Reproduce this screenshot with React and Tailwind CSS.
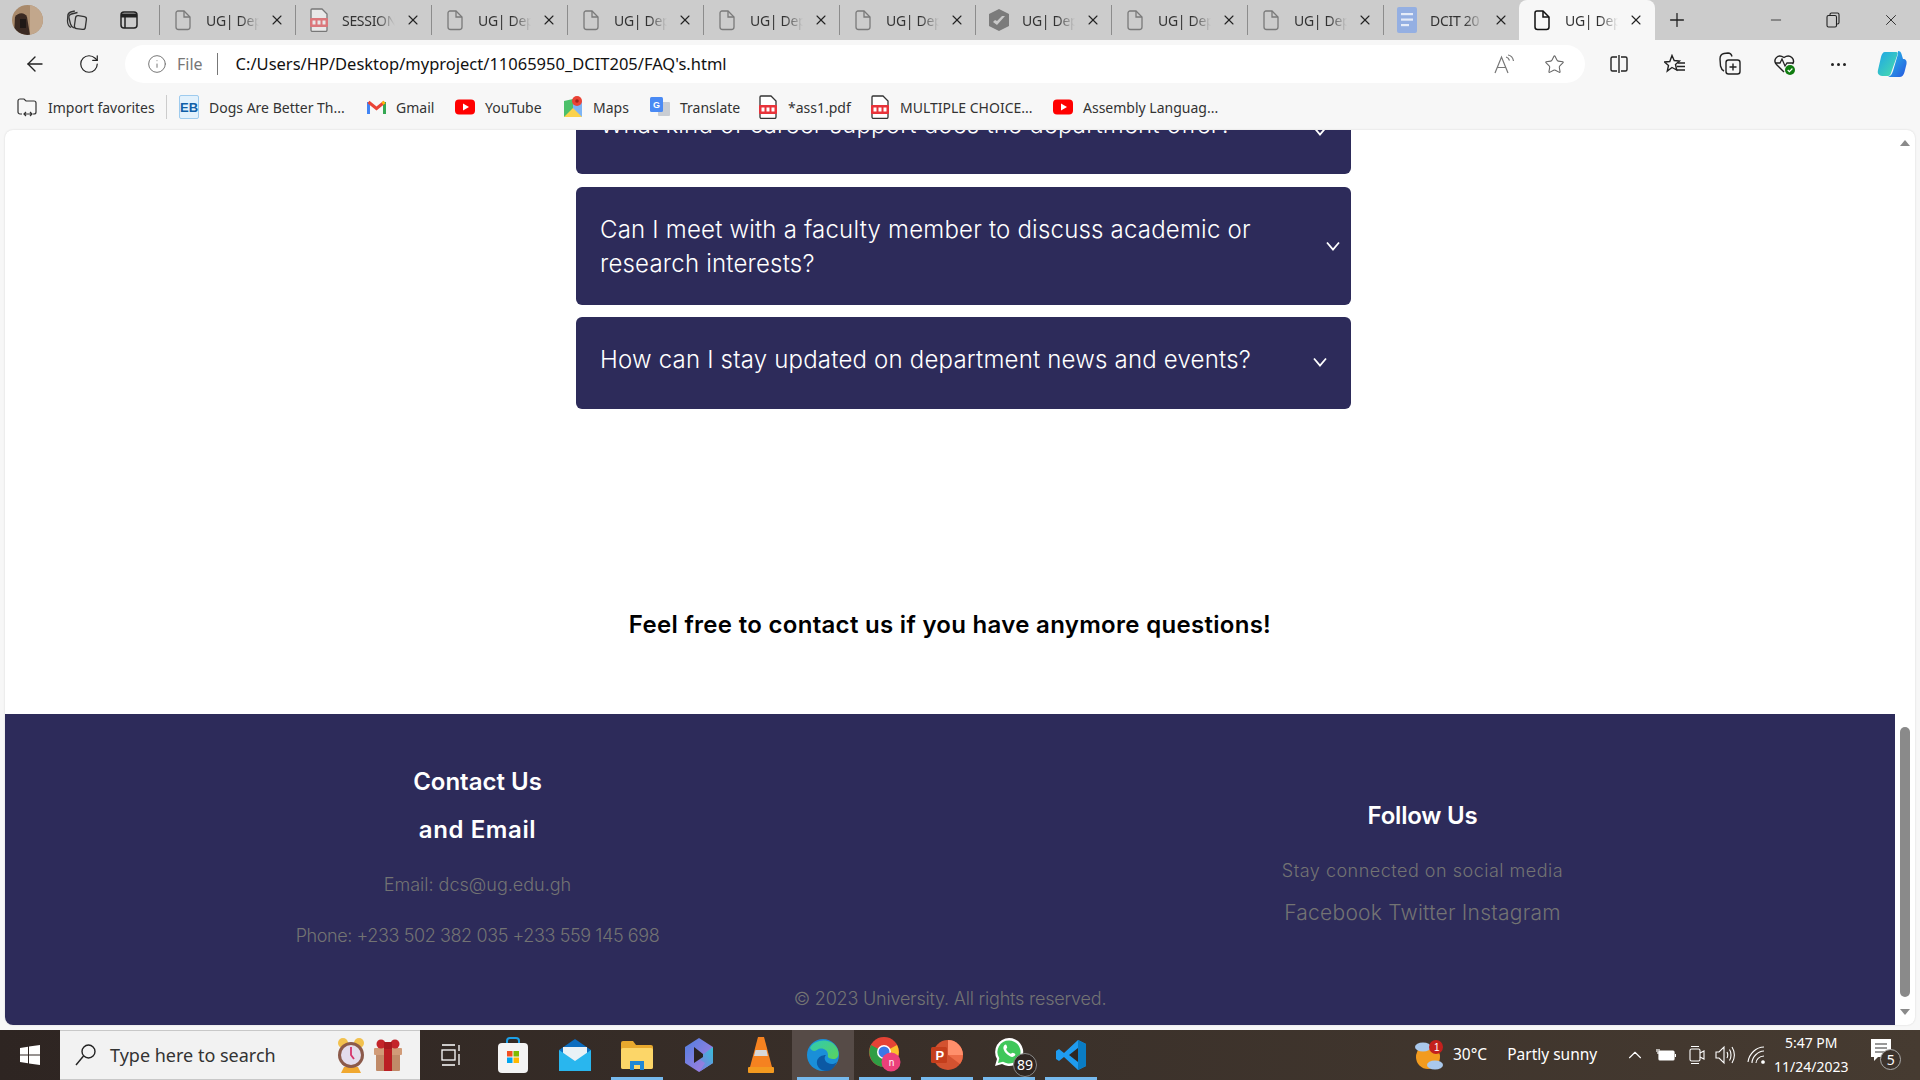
import React from "react";
import { X, Plus, Minus, ArrowLeft, RotateCw, Info, Star, ChevronUp } from "lucide-react";

const Doc = ({ c = "#7a7a7a", w = 1.3 }) => (
  <svg width="18" height="22" viewBox="0 0 18 22" fill="none" stroke={c} strokeWidth={w}>
    <path d="M4 2h6l6 6v10a2.5 2.5 0 0 1-2.5 2.5h-9A2.5 2.5 0 0 1 2 18V4a2 2 0 0 1 2-2Z" />
    <path d="M10 2v6h6" />
  </svg>
);
const Pdf = ({ fade }) => (
  <svg width="20" height="24" viewBox="0 0 20 24" opacity={fade ? 0.55 : 1}>
    <path d="M3 1h10l5 5v16a1.5 1.5 0 0 1-1.5 1.5h-13A1.5 1.5 0 0 1 2 22V2a1 1 0 0 1 1-1Z" fill="#fff" stroke="#333" strokeWidth="1.3" />
    <rect x="1" y="10" width="18" height="9" rx="1" fill="#e8333a" />
    <rect x="3.5" y="12.5" width="3" height="4" fill="#fff" />
    <rect x="8.5" y="12.5" width="3" height="4" fill="#fff" />
    <rect x="13.5" y="12.5" width="3" height="4" fill="#fff" />
  </svg>
);
const Shield = () => (
  <svg width="22" height="24" viewBox="0 0 22 24">
    <path d="M11 1 21 6v12l-10 5L1 18V6Z" fill="#7b7b7b" />
    <path d="M5 14l4 3 8-9-3 0-5 5-2-1Z" fill="#c9c9c9" />
  </svg>
);
const DocBlue = () => (
  <svg width="20" height="26" viewBox="0 0 20 26">
    <rect width="20" height="26" rx="2" fill="#94afe2" />
    <rect x="4" y="6" width="12" height="2.2" fill="#e6ecf8" />
    <rect x="4" y="11.5" width="12" height="2.2" fill="#e6ecf8" />
    <rect x="4" y="17" width="8" height="2.2" fill="#e6ecf8" />
  </svg>
);
const tabs = [
  { t: "UG| Dep", i: <Doc /> },
  { t: "SESSION", i: <Pdf fade /> },
  { t: "UG| Dep", i: <Doc /> },
  { t: "UG| Dep", i: <Doc /> },
  { t: "UG| Dep", i: <Doc /> },
  { t: "UG| Dep", i: <Doc /> },
  { t: "UG| Dep", i: <Shield /> },
  { t: "UG| Dep", i: <Doc /> },
  { t: "UG| Dep", i: <Doc /> },
  { t: "DCIT 20", i: <DocBlue /> },
];

const Tab = ({ t, i, active }) => (
  <div className={active
    ? "flex h-[40px] w-[136px] shrink-0 items-center rounded-t-[8px] bg-[#f7f7f7]"
    : "flex h-[40px] w-[136px] shrink-0 items-center"}>
    {!active && <div className="h-[30px] w-px bg-[#8c8c8c]" />}
    <div className="flex w-[46px] justify-center">{i}</div>
    <div className="w-[53px] overflow-hidden text-[14px] tracking-[-0.3px] whitespace-nowrap text-[#333] [mask-image:linear-gradient(to_right,black_65%,transparent)]">{t}</div>
    <div className="flex w-[36px] justify-center"><X size={16} strokeWidth={1.6} color="#222" /></div>
  </div>
);

const YT = () => (
  <svg width="20" height="16" viewBox="0 0 20 16">
    <rect width="20" height="15" y=".5" rx="4" fill="#f00" />
    <path d="M8 4.5 14 8l-6 3.5Z" fill="#fff" />
  </svg>
);
const Gmail = () => (
  <svg width="19" height="15" viewBox="0 0 19 15" fill="none">
    <path d="M1.5 14V2" stroke="#4285f4" strokeWidth="3" />
    <path d="M17.5 14V2" stroke="#34a853" strokeWidth="3" />
    <path d="M1.5 2l8 6.5L17.5 2" stroke="#ea4335" strokeWidth="3" />
    <path d="M17.5 2l-2 1.6" stroke="#fbbc04" strokeWidth="3" />
  </svg>
);
const Maps = () => (
  <svg width="18" height="22" viewBox="0 0 18 22">
    <path d="M0 5 9 3v16l-9 2Z" fill="#4cc06a" />
    <path d="M9 3l9 2v16l-9-2Z" fill="#7db4f5" />
    <path d="M0 21 9 12l9 9Z" fill="#fbd24c" />
    <circle cx="13" cy="5" r="5" fill="#ea4335" />
    <circle cx="13" cy="5" r="1.8" fill="#a4241c" />
  </svg>
);
const Translate = () => (
  <svg width="20" height="20" viewBox="0 0 20 20">
    <rect x="8" y="5" width="12" height="14" rx="1" fill="#c9cdd3" />
    <rect width="13" height="15" rx="1.5" fill="#4a8af4" />
    <text x="3" y="11" fontSize="9" fontWeight="700" fill="#fff" fontFamily="Liberation Sans">G</text>
  </svg>
);
const EB = () => (
  <div className="flex h-[24px] w-[20px] items-center justify-center rounded-[2px] border border-[#9ecbee] bg-[#e2f1fc] font-['Liberation_Sans',sans-serif] text-[13px] leading-none font-bold text-[#0f5fa8]">EB</div>
);
const ImportIcon = () => (
  <svg width="20" height="20" viewBox="0 0 20 20" fill="none" stroke="#333" strokeWidth="1.2">
    <path d="M5 17H3a2 2 0 0 1-2-2V4a2 2 0 0 1 2-2h4l2 2h8a2 2 0 0 1 2 2v9a2 2 0 0 1-2 2h-1" />
    <path d="M7 17h8M9 15l-2 2 2 2M13 15l2 2-2 2" />
  </svg>
);

const BM = ({ icon, t, w }) => (
  <div className="flex shrink-0 items-center" style={{ width: w }}>
    <div className="flex w-[20px] justify-center">{icon}</div>
    <span className="ml-[10px] text-[14px] whitespace-nowrap text-[#333]">{t}</span>
  </div>
);

const Card = ({ children, className = "", chevron }) => (
  <div className={`relative w-[775px] rounded-[6px] bg-[#2d2b5a] pt-[26px] pl-[24px] text-[24px] leading-[34px] font-light tracking-[0.2px] text-white ${className}`}>
    {children}
    {chevron}
  </div>
);

const Chevron = ({ className }) => (
  <svg className={className} width="14" height="10" viewBox="0 0 14 10" fill="none" stroke="#fff" strokeWidth="1.8"><path d="M1 1.5 7 8.5l6-7" /></svg>
);

const Avatar = () => (
  <svg width="31" height="30" viewBox="0 0 31 30">
    <defs><clipPath id="av"><ellipse cx="15.5" cy="15" rx="15.5" ry="15" /></clipPath></defs>
    <g clipPath="url(#av)">
      <rect width="31" height="30" fill="#a98a6b" />
      <rect x="18" width="13" height="30" fill="#c2a78c" />
      <path d="M3 12c3-5 10-5 12 0l3 18H2Z" fill="#3b2a22" />
      <rect x="8" y="14" width="6" height="9" fill="#1f1815" />
    </g>
  </svg>
);
const Collections = () => (
  <svg width="22" height="22" viewBox="0 0 22 22" fill="none" stroke="#333" strokeWidth="1.3">
    <rect x="9" y="7" width="11" height="13" rx="2.5" transform="rotate(8 14 13)" />
    <path d="M8 19c-2-1-3-2-3.5-4L3 9c-.5-2 .5-3.5 2.5-4l6-1.5" />
    <path d="M5 18.5C3 17.5 1.5 15 1.5 12L1.8 7c0-2 1.2-3.5 3-4l4-1" />
  </svg>
);
const TabAct = () => (
  <svg width="20" height="20" viewBox="0 0 20 20" fill="none" stroke="#222" strokeWidth="1.5">
    <rect x="2" y="2" width="16" height="16" rx="3" />
    <path d="M2 5.5h16" strokeWidth="4" />
    <path d="M6 6v12" />
  </svg>
);
const Restore = () => (
  <svg width="14" height="16" viewBox="0 0 14 16" fill="none" stroke="#222" strokeWidth="1.1">
    <rect x="1" y="3.5" width="9.5" height="11.5" rx="1.5" />
    <path d="M4 3.5V2.5A1.5 1.5 0 0 1 5.5 1h6A1.5 1.5 0 0 1 13 2.5v8a1.5 1.5 0 0 1-1.5 1.5h-1" />
  </svg>
);
const ReadAloud = () => (
  <svg width="22" height="20" viewBox="0 0 22 20" fill="none" stroke="#777" strokeWidth="1.2">
    <path d="M1 19 7.5 3l6.5 16M3.5 13.5h8" />
    <path d="M12 3c2 .5 3 2 3.5 3.5M14 1c3 .5 5 3 5.5 6" />
  </svg>
);
const Split = () => (
  <svg width="20" height="20" viewBox="0 0 20 20" fill="none" stroke="#222" strokeWidth="1.4">
    <path d="M8 3H3.5A1.5 1.5 0 0 0 2 4.5v11A1.5 1.5 0 0 0 3.5 17H8" />
    <path d="M12 3h4.5A1.5 1.5 0 0 1 18 4.5v11a1.5 1.5 0 0 1-1.5 1.5H12" />
    <path d="M10 1v18" />
  </svg>
);
const FavList = () => (
  <svg width="22" height="20" viewBox="0 0 22 20" fill="none" stroke="#222" strokeWidth="1.4">
    <path d="M8 1.5 10.2 6.5l5.3.5-4 3.5 1.2 5.5L8 13.5 3.3 17l1.2-5.5-4-3.5 5.3-.5Z" />
    <path d="M14 9h7M13 12.5h8M12.5 16h8.5" />
  </svg>
);
const CollAdd = () => (
  <svg width="22" height="24" viewBox="0 0 22 24" fill="none" stroke="#222" strokeWidth="1.4">
    <rect x="7" y="8" width="14" height="14" rx="2.5" />
    <path d="M14 11.5v7M10.5 15h7" />
    <path d="M5 19C3 18 2 16 1.5 14L1 7c0-3 1.5-5 4-5.5L9 1c2 0 3.5 1.5 4 3.5" />
  </svg>
);
const Health = () => (
  <svg width="24" height="24" viewBox="0 0 24 24" fill="none">
    <path d="M11 20 3.5 12.5C-.5 8 4.5 1 11 5.5 17.5 1 22.5 8 19.5 12" stroke="#222" strokeWidth="1.4" />
    <path d="M2 11h5l2-4 3 7 2-3h6" stroke="#222" strokeWidth="1.3" />
    <circle cx="17" cy="18" r="5" fill="#107c10" />
    <path d="M14.7 18l1.7 1.7 3-3.2" stroke="#fff" strokeWidth="1.2" />
  </svg>
);
const Copilot = () => (
  <svg width="30" height="30" viewBox="0 0 30 30">
    <defs>
      <linearGradient id="cp1" x1="0" y1="0" x2="1" y2="1"><stop offset="0" stopColor="#1ea5e8" /><stop offset="1" stopColor="#4be0a8" /></linearGradient>
      <linearGradient id="cp2" x1="0" y1="0" x2="1" y2="1"><stop offset="0" stopColor="#27c4e8" /><stop offset="1" stopColor="#2756e0" /></linearGradient>
    </defs>
    <path d="M8 3h11c2 0 2 1 1.5 2.5L14 24c-1 3-2 3-4 3H7c-5 0-7-2-6-6l3-13c.7-3 2-5 4-5Z" fill="url(#cp1)" />
    <path d="M21 2c2 0 3 1 3.5 3L26 10c3 0 4 2 3.5 5l-2 8c-.7 3-2.5 5-5 5H11c3-1 4-3 5-6l5-17Z" fill="url(#cp2)" />
  </svg>
);

const Win = () => (
  <svg width="20" height="20" viewBox="0 0 20 20" fill="#fff"><path d="M0 3l8-1.2v7.700H0ZM9 1.600 20 0v9.500H9ZM0 10.500h8v7.700L0 17ZM9 10.500h11V20L9 18.400Z" /></svg>
);
const Search = () => (
  <svg width="22" height="24" viewBox="0 0 22 24" fill="none" stroke="#222" strokeWidth="1.4"><circle cx="13.5" cy="8.5" r="6.5" /><path d="M8.5 13 1 22" /></svg>
);
const AlarmClock = () => (
  <svg width="28" height="36" viewBox="0 0 28 36">
    <circle cx="6" cy="6" r="5" fill="#f2c14e" />
    <circle cx="22" cy="6" r="5" fill="#f2c14e" />
    <path d="M7 30h14l3 6H4Z" fill="#f0a830" />
    <circle cx="14" cy="18" r="13" fill="#8c5a4a" />
    <circle cx="14" cy="18" r="10" fill="#e3dcec" />
    <path d="M14 10v8l3 4" stroke="#d6336c" strokeWidth="1.8" fill="none" />
  </svg>
);
const Gift = () => (
  <svg width="28" height="32" viewBox="0 0 28 32">
    <rect x="2" y="12" width="24" height="20" rx="1" fill="#c08a68" />
    <rect y="9" width="28" height="7" rx="1" fill="#d19b78" />
    <rect x="10" y="9" width="8" height="23" fill="#bb1f24" />
    <circle cx="7" cy="5" r="4.5" fill="#c4242a" />
    <circle cx="21" cy="5" r="4.5" fill="#c4242a" />
    <rect x="10" y="3" width="8" height="7" fill="#a81a1f" />
  </svg>
);
const TaskView = () => (
  <svg width="20" height="24" viewBox="0 0 20 24" fill="none" stroke="#fff" strokeWidth="1.3">
    <path d="M1 2h13M1 22h13" /><rect x="1" y="7" width="13" height="10" /><path d="M18 2v6M18 11v11" />
  </svg>
);
const Store = () => (
  <svg width="30" height="36" viewBox="0 0 30 36">
    <path d="M9 7V4a3 3 0 0 1 3-3h6a3 3 0 0 1 3 3v3" fill="none" stroke="#1ca0e8" strokeWidth="2" />
    <rect y="6" width="30" height="30" rx="4" fill="#f4f4f4" />
    <rect x="9" y="14" width="5.5" height="5.5" fill="#f25022" />
    <rect x="15.5" y="14" width="5.5" height="5.5" fill="#7fba00" />
    <rect x="9" y="20.5" width="5.5" height="5.5" fill="#00a4ef" />
    <rect x="15.5" y="20.5" width="5.5" height="5.5" fill="#ffb900" />
  </svg>
);
const Mail = () => (
  <svg width="32" height="32" viewBox="0 0 32 32">
    <path d="M0 11 16 0l16 11v21H0Z" fill="#0b6cbf" />
    <path d="M4 8h24v14H4Z" fill="#e9f1f6" />
    <path d="M0 11 16 22 32 11v21H0Z" fill="#29b6ee" />
  </svg>
);
const Explorer = () => (
  <svg width="32" height="30" viewBox="0 0 32 30">
    <path d="M0 3a2 2 0 0 1 2-2h10l3 4h15a2 2 0 0 1 2 2v20a2 2 0 0 1-2 2H2a2 2 0 0 1-2-2Z" fill="#e8a92e" />
    <rect y="8" width="32" height="21" rx="2" fill="#fcd668" />
    <path d="M9 30v-9h14v9h-4v-5h-6v5Z" fill="#1e87d6" />
  </svg>
);
const CopilotApp = () => (
  <svg width="28" height="34" viewBox="0 0 28 34">
    <defs><linearGradient id="ca" x1="0" y1="0" x2="1" y2="1"><stop offset="0" stopColor="#4f7fe0" /><stop offset="1" stopColor="#b07fe0" /></linearGradient>
    <linearGradient id="cb" x1="1" y1="0" x2="0" y2="1"><stop offset="0" stopColor="#35c0d8" /><stop offset="1" stopColor="#8a6fe0" /></linearGradient></defs>
    <path d="M14 0 28 9v16L14 34 0 25V9Z" fill="url(#ca)" />
    <path d="M28 9v16l-14 9 6-9-8-5 8-5Z" fill="url(#cb)" />
    <path d="M9 9l9 7v3l-9 6Z" fill="#2a2320" />
  </svg>
);
const VLC = () => (
  <svg width="26" height="36" viewBox="0 0 26 36">
    <path d="M10 0h6l8 30H2Z" fill="#f58220" />
    <path d="M7.5 13h11l1.3 6H6Z" fill="#d8d8d8" />
    <rect y="30" width="26" height="6" rx="1" fill="#f39a1f" />
  </svg>
);
const Edge = () => (
  <svg width="32" height="32" viewBox="0 0 32 32">
    <defs><linearGradient id="eg" x1="0" y1="0" x2="1" y2="1"><stop offset="0" stopColor="#2fc9b3" /><stop offset="1" stopColor="#5cd35a" /></linearGradient></defs>
    <circle cx="16" cy="16" r="16" fill="#1a8fd8" />
    <path d="M3 9C7 0 24-2 30 9c3 6 1 11-3 11-4 0-7-1-6-4 0-6-7-8-11-5-3 2-5 1-7-2Z" fill="url(#eg)" />
    <path d="M20 32c-7 0-11-5-10-10 1-4 5-6 9-6-2 2-2 6 2 8 3 2 7 1 9-1-3 6-6 9-10 9Z" fill="#0c59a4" />
  </svg>
);
const Chrome = () => (
  <svg width="32" height="36" viewBox="0 0 32 36">
    <circle cx="15" cy="15" r="15" fill="#e54335" />
    <path d="M15 15 28 8a15 15 0 0 1-9 21.5Z" fill="#fbc02d" />
    <path d="M15 15 2 8a15 15 0 0 0 13 22Z" fill="#2f9e44" />
    <circle cx="15" cy="15" r="7" fill="#fff" />
    <circle cx="15" cy="15" r="5.5" fill="#3b78e7" />
    <circle cx="22" cy="25" r="9.5" fill="#ec407a" />
    <text x="19.8" y="28.5" fontSize="10" fill="#fff" fontFamily="Liberation Sans">n</text>
  </svg>
);
const PPT = () => (
  <svg width="32" height="30" viewBox="0 0 32 30">
    <circle cx="17" cy="15" r="15" fill="#d35230" />
    <path d="M17 15V0a15 15 0 0 1 15 15Z" fill="#ff8f6b" />
    <path d="M17 15h15a15 15 0 0 1-3 9Z" fill="#ed6c47" />
    <rect y="7" width="16" height="16" rx="1.5" fill="#c43e1c" />
    <text x="4.5" y="20" fontSize="13" fontWeight="700" fill="#fff" fontFamily="Liberation Sans">P</text>
  </svg>
);
const WA = () => (
  <div className="relative h-[36px] w-[30px]">
    <svg width="30" height="30" viewBox="0 0 30 30" className="absolute top-0 left-0">
      <path d="M15 1a14 14 0 1 1-7 26L1 29l2-7A14 14 0 0 1 15 1Z" fill="#fff" />
      <path d="M15 3.5a11.5 11.5 0 1 1-6 21.3L4 26l1.3-4.8A11.5 11.5 0 0 1 15 3.5Z" fill="#3fc75a" />
      <path d="M10.5 8c1-1 1.8-.5 2 .3l.7 2c0 .7-1 1.3-1 2 .7 2 2.5 3.700 4.500 4.500.7 0 1.300-1 2-1l2 .8c.8.5 1 1.200 0 2.200-2 2-4.500 1-7-1-3-2.300-6-7-3.200-9.800Z" fill="#fff" />
    </svg>
    <div className="absolute top-[16px] left-[19px] flex h-[24px] w-[24px] items-center justify-center rounded-full border border-[#888] bg-[#2f2622] text-[14px] leading-none text-white">89</div>
  </div>
);
const VS = () => (
  <svg width="30" height="30" viewBox="0 0 30 30">
    <path d="M22 0 30 4v22l-8 4-14-13-5 4-3-2v-8l3-2 5 4Z" fill="#1f9cf0" />
    <path d="M22 8 13 15l9 7Z" fill="#2f2622" />
    <path d="M22 0 30 4v22l-8 4Z" fill="#0a7cc4" />
  </svg>
);
const Weather = () => (
  <svg width="32" height="32" viewBox="0 0 32 32">
    <circle cx="14" cy="18" r="12" fill="#f29b1f" />
    <ellipse cx="9" cy="8" rx="8" ry="4.5" fill="#a9c8ec" />
    <ellipse cx="21" cy="26" rx="8" ry="4.5" fill="#a9c8ec" />
    <circle cx="22" cy="8" r="7" fill="#c4201d" />
    <text x="20" y="11.5" fontSize="10" fill="#fff" fontFamily="Liberation Sans">1</text>
  </svg>
);
const Batt = () => (
  <svg width="20" height="14" viewBox="0 0 20 14" fill="none" stroke="#fff" strokeWidth="1.2">
    <rect x="3" y="3" width="15" height="9" rx="1" fill="#fff" />
    <path d="M19.5 6v3M1 1v3M3 1v3M2 4v2" />
  </svg>
);
const Cam = () => (
  <svg width="16" height="20" viewBox="0 0 16 20" fill="none" stroke="#fff" strokeWidth="1.1">
    <rect x="1" y="4" width="10" height="12" rx="1.5" />
    <path d="M11 8l4-2v8l-4-2M2 1.5h8M2 18.5h8" />
  </svg>
);
const Speaker = () => (
  <svg width="20" height="20" viewBox="0 0 20 20" fill="none" stroke="#fff" strokeWidth="1.1">
    <path d="M1 7h3l5-5v16l-5-5H1Z" />
    <path d="M12 7c1 2 1 4 0 6M14.5 4.5c2 3 2 8 0 11M17 2c3 5 3 11 0 16" />
  </svg>
);
const Wifi = () => (
  <svg width="20" height="20" viewBox="0 0 20 20" fill="none" stroke="#fff" strokeWidth="1.1">
    <path d="M1 17C2 9 9 2 17 2M5 18c0-6 6-12 12-12M9 18c0-3 3-7 8-7" />
    <circle cx="16" cy="17" r="1.3" fill="#fff" />
  </svg>
);
const Notif = () => (
  <div className="relative h-[32px] w-[32px]">
    <svg width="22" height="24" viewBox="0 0 22 24" className="absolute top-0 left-0">
      <path d="M0 0h20v18H7l-4 4v-4H0Z" fill="#fff" />
      <path d="M4 5h12M4 9h12M4 13h12" stroke="#333" strokeWidth="1.2" />
    </svg>
    <div className="absolute top-[10px] left-[9px] flex h-[21px] w-[21px] items-center justify-center rounded-full border border-[#aaa] bg-[#3d332c] text-[14px] leading-none text-white">5</div>
  </div>
);

const TaskApp = ({ children, line, active }) => (
  <div className={`relative flex h-[50px] w-[62px] shrink-0 items-center justify-center ${active ? "bg-[#564b47]" : ""}`}>
    {children}
    {line && <div className="absolute right-[5px] bottom-0 left-[5px] h-[3px] bg-[#76b9ed]" />}
  </div>
);

const muted = "font-light text-[#737373]";

export default function App() {
  return (
    <div className="flex h-[1080px] w-[1920px] flex-col overflow-hidden bg-[#f7f7f7] font-['Noto_Sans',sans-serif]">
      {/* tab strip */}
      <div className="flex h-[40px] shrink-0 items-center bg-[#cccccc]">
        <div className="ml-[12px] w-[31px]"><Avatar /></div>
        <div className="ml-[23px] w-[22px]"><Collections /></div>
        <div className="ml-[31px] w-[20px]"><TabAct /></div>
        <div className="ml-[20px] flex">
          {tabs.map((t, i) => <Tab key={i} {...t} />)}
        </div>
        <Tab t="UG| Dep" i={<Doc c="#111" w={1.5} />} active />
        <div className="ml-[11px] flex w-[22px] justify-center"><Plus size={22} strokeWidth={1.4} color="#222" /></div>
        <div className="ml-[80px] w-[16px]"><Minus size={16} strokeWidth={1.2} color="#222" /></div>
        <div className="ml-[42px] w-[16px]"><Restore /></div>
        <div className="ml-[40px]"><X size={18} strokeWidth={1.2} color="#222" /></div>
      </div>
      {/* toolbar */}
      <div className="flex h-[44px] shrink-0 items-end pb-[1px]">
        <div className="flex h-[38px] w-[125px] items-center">
          <div className="ml-[23px]"><ArrowLeft size={24} strokeWidth={1.4} color="#222" /></div>
          <div className="ml-[31px]"><RotateCw size={22} strokeWidth={1.3} color="#222" /></div>
        </div>
        <div className="flex h-[38px] w-[1460px] items-center rounded-full bg-white">
          <div className="ml-[22px]"><Info size={20} strokeWidth={1.2} color="#777" /></div>
          <span className="ml-[10px] text-[16px] text-[#777]">File</span>
          <div className="ml-[14px] h-[22px] w-px bg-[#777]" />
          <span className="ml-[18px] text-[16.5px] whitespace-nowrap text-[#111]">C:/Users/HP/Desktop/myproject/11065950_DCIT205/FAQ's.html</span>
          <div className="ml-auto"><ReadAloud /></div>
          <div className="mr-[20px] ml-[28px]"><Star size={21} strokeWidth={1.2} color="#666" /></div>
        </div>
        <div className="flex h-[38px] flex-1 items-center">
          <div className="ml-[24px]"><Split /></div>
          <div className="ml-[35px]"><FavList /></div>
          <div className="ml-[33px]"><CollAdd /></div>
          <div className="ml-[32px]"><Health /></div>
          <div className="ml-[34px] flex gap-[3px]"><i className="h-[3px] w-[3px] rounded-full bg-[#222]" /><i className="h-[3px] w-[3px] rounded-full bg-[#222]" /><i className="h-[3px] w-[3px] rounded-full bg-[#222]" /></div>
          <div className="ml-[31px]"><Copilot /></div>
        </div>
      </div>
      {/* bookmarks */}
      <div className="flex h-[46px] shrink-0 items-center">
        <div className="ml-[17px] flex w-[149px] shrink-0 items-center">
          <ImportIcon />
          <span className="ml-[11px] text-[14px] whitespace-nowrap text-[#333]">Import favorites</span>
        </div>
        <div className="h-[24px] w-px bg-[#ccc]" />
        <div className="ml-[12px] flex">
          <BM w={187} icon={<EB />} t="Dogs Are Better Th..." />
          <BM w={89} icon={<Gmail />} t="Gmail" />
          <BM w={108} icon={<YT />} t="YouTube" />
          <BM w={87} icon={<Maps />} t="Maps" />
          <BM w={108} icon={<Translate />} t="Translate" />
          <BM w={112} icon={<Pdf />} t="*ass1.pdf" />
          <BM w={183} icon={<Pdf />} t="MULTIPLE CHOICE..." />
          <BM w={180} icon={<YT />} t="Assembly Languag..." />
        </div>
      </div>
      {/* page */}
      <div className="mx-[5px] flex h-[895px] shrink-0 overflow-hidden rounded-[8px] bg-white shadow-[0_0_2px_rgba(0,0,0,0.15)]">
        <main className="flex w-[1890px] shrink-0 flex-col font-['Inter',sans-serif]">
          <div className="h-[279px] shrink-0 overflow-hidden">
            <div className="-mt-[48px] ml-[571px] flex flex-col gap-[13px]">
              <Card className="h-[92px]" chevron={<Chevron className="absolute top-[44px] right-[24px]" />}>What kind of career support does the department offer?</Card>
              <Card className="h-[118px]" chevron={<Chevron className="absolute top-[54px] right-[11px]" />}>Can I meet with a faculty member to discuss academic or<br />research interests?</Card>
            </div>
            <div className="mt-[12px] ml-[571px]">
              <Card className="h-[92px]" chevron={<Chevron className="absolute top-[40px] right-[24px]" />}>How can I stay updated on department news and events?</Card>
            </div>
          </div>
          <h2 className="mt-[198px] h-[36px] shrink-0 text-center text-[24px] leading-[36px] font-semibold tracking-[0.3px] text-black">Feel free to contact us if you have anymore questions!</h2>
          <footer className="mt-[71px] flex h-[311px] shrink-0 flex-col bg-[#2d2b5a] pt-[44px]">
            <div className="grid h-[192px] shrink-0 grid-cols-2">
              <div className="flex flex-col items-center">
                <h3 className="text-[24px] leading-[48px] font-semibold text-white">Contact Us</h3>
                <h3 className="text-[24px] leading-[48px] font-semibold tracking-[0.6px] text-white">and Email</h3>
                <p className={`mt-[17px] text-[18px] leading-[27px] ${muted}`}>Email: dcs@ug.edu.gh</p>
                <p className={`mt-[24px] text-[18px] leading-[27px] tracking-[-0.4px] ${muted}`}>Phone: +233 502 382 035 +233 559 145 698</p>
              </div>
              <div className="flex flex-col items-center pt-[34px]">
                <h3 className="text-[24px] leading-[48px] font-semibold tracking-[-0.2px] text-white">Follow Us</h3>
                <p className={`mt-[17px] text-[18px] leading-[27px] tracking-[0.5px] ${muted}`}>Stay connected on social media</p>
                <p className={`mt-[14px] text-[21px] leading-[30px] tracking-[0.25px] ${muted}`}>Facebook Twitter Instagram</p>
              </div>
            </div>
            <p className={`mt-[35px] text-center text-[18px] leading-[27px] tracking-[-0.2px] ${muted}`}>© 2023 University. All rights reserved.</p>
          </footer>
        </main>
        <div className="relative flex w-[20px] flex-col items-center justify-between py-[10px]">
          <div className="h-0 w-0 border-x-[5px] border-b-[6px] border-x-transparent border-b-[#8a8a8a]" />
          <div className="absolute top-[597px] h-[270px] w-[10px] rounded-full bg-[#8a8a8a]" />
          <div className="h-0 w-0 border-x-[5px] border-t-[6px] border-x-transparent border-t-[#8a8a8a]" />
        </div>
      </div>
      {/* taskbar */}
      <div className="mt-[5px] flex h-[50px] shrink-0 items-center bg-gradient-to-r from-[#2e2522] to-[#463b31] text-white">
        <div className="flex w-[60px] justify-center"><Win /></div>
        <div className="flex h-[50px] w-[360px] items-center border-y border-[#c8c8c8] bg-[#f2f2f2] text-[#222]">
          <div className="ml-[15px]"><Search /></div>
          <span className="ml-[13px] text-[18px] whitespace-nowrap text-[#333]">Type here to search</span>
          <div className="ml-[61px]"><AlarmClock /></div>
          <div className="ml-[9px]"><Gift /></div>
        </div>
        <div className="flex">
          <TaskApp><TaskView /></TaskApp>
          <TaskApp><Store /></TaskApp>
          <TaskApp><Mail /></TaskApp>
          <TaskApp line><Explorer /></TaskApp>
          <TaskApp><CopilotApp /></TaskApp>
          <TaskApp><VLC /></TaskApp>
          <TaskApp line active><Edge /></TaskApp>
          <TaskApp line><Chrome /></TaskApp>
          <TaskApp line><PPT /></TaskApp>
          <TaskApp line><WA /></TaskApp>
          <TaskApp line><VS /></TaskApp>
        </div>
        <div className="ml-[312px] flex items-center">
          <Weather />
          <span className="ml-[7px] text-[15.5px] whitespace-nowrap">30°C</span>
          <span className="ml-[20px] text-[15.5px] whitespace-nowrap">Partly sunny</span>
          <div className="ml-[27px]"><ChevronUp size={22} strokeWidth={1.2} color="#fff" /></div>
          <div className="ml-[10px]"><Batt /></div>
          <div className="ml-[13px]"><Cam /></div>
          <div className="ml-[10px]"><Speaker /></div>
          <div className="ml-[12px]"><Wifi /></div>
          <div className="ml-[6px] flex w-[76px] flex-col items-center text-[14px] leading-[24px] whitespace-nowrap">
            <span>5:47 PM</span>
            <span>11/24/2023</span>
          </div>
          <div className="ml-[22px]"><Notif /></div>
        </div>
      </div>
    </div>
  );
}
